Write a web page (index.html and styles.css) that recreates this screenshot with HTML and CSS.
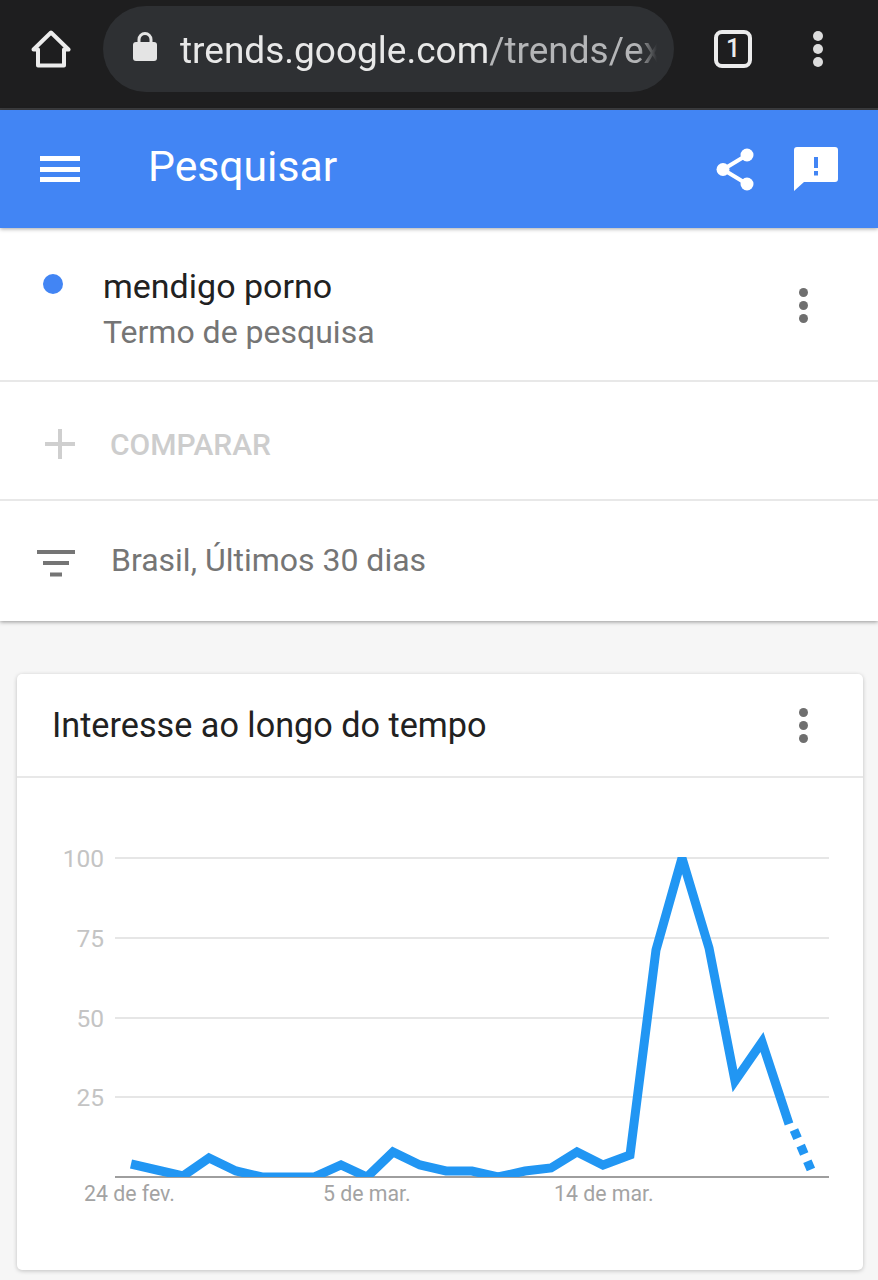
FILE: index.html
```html
<!DOCTYPE html>
<html lang="pt">
<head>
    <meta charset="utf-8" />
    <title>Google Trends</title>
    <link rel="stylesheet" href="styles.css">
</head>
<body>

<div class="browser">
    <svg class="home" width="40" height="40" viewBox="0 0 40 40"><path d="M2.500 20.500 20 3.500 37.500 20.500H33V36.500H7V20.500Z" fill="none" stroke="#ececec" stroke-width="4" stroke-linejoin="round"/></svg>
    <div class="url">
        <svg class="lock" width="24" height="30" viewBox="0 0 24 30"><path d="M6 13V8.500a6 6 0 0 1 12 0V13" fill="none" stroke="#e4e4e4" stroke-width="3"/><rect x="0" y="11" width="24" height="19" rx="3" fill="#e4e4e4"/></svg>
        <div class="urlText">trends.google.com<span>/trends/ex</span></div>
    </div>
    <div class="tabs">1</div>
    <div class="dots"><i></i><i></i><i></i></div>
</div>

<div class="appbar">
    <div class="burger"><i></i><i></i><i></i></div>
    <div class="title">Pesquisar</div>
    <svg class="share" width="40" height="44" viewBox="0 0 40 44"><path d="M31 7 7 21.500 31 36" fill="none" stroke="#fff" stroke-width="4"/><circle cx="31" cy="7" r="6.500" fill="#fff"/><circle cx="7" cy="21.500" r="6.500" fill="#fff"/><circle cx="31" cy="36" r="6.500" fill="#fff"/></svg>
    <svg class="feedback" width="44" height="44" viewBox="0 0 44 44"><path d="M3 0H41a3 3 0 0 1 3 3V32a3 3 0 0 1-3 3H10L0 44V3a3 3 0 0 1 3-3Z" fill="#fff"/><rect x="20" y="10" width="4" height="11" fill="#4285f4"/><rect x="20" y="24" width="4" height="4.500" fill="#4285f4"/></svg>
</div>

<div class="panel">
    <div class="row term">
        <span class="dot"></span>
        <div class="termText">
            <div class="termName">mendigo porno</div>
            <div class="termType">Termo de pesquisa</div>
        </div>
        <div class="more"><i></i><i></i><i></i></div>
    </div>
    <div class="row compare">
        <svg class="plus" width="30" height="30" viewBox="0 0 30 30"><path d="M0 15H30M15 0V30" stroke="#cfcfcf" stroke-width="4"/></svg>
        <span>COMPARAR</span>
    </div>
    <div class="row filter">
        <svg class="filterIcon" width="40" height="28" viewBox="0 0 40 28"><path d="M1 2H39M7 13H33M14 24.500H26" stroke="#757575" stroke-width="4"/></svg>
        <span>Brasil, Últimos 30 dias</span>
    </div>
</div>

<div class="card">
    <div class="cardHead">
        <div class="cardTitle">Interesse ao longo do tempo</div>
        <div class="more"><i></i><i></i><i></i></div>
    </div>
    <svg class="chart" width="846" height="492" viewBox="17 778 846 492">
        <defs>
            <clipPath id="plot"><rect x="115" y="857" width="714" height="320"/></clipPath>
        </defs>
        <g stroke="#e6e6e6" stroke-width="2">
            <line x1="115" y1="858" x2="829" y2="858"/>
            <line x1="115" y1="938" x2="829" y2="938"/>
            <line x1="115" y1="1018" x2="829" y2="1018"/>
            <line x1="115" y1="1097" x2="829" y2="1097"/>
        </g>
        <line x1="115" y1="1177" x2="829" y2="1177" stroke="#9e9e9e" stroke-width="2"/>
        <g class="yLabels" text-anchor="end">
            <text x="104" y="867">100</text>
            <text x="104" y="947">75</text>
            <text x="104" y="1027">50</text>
            <text x="104" y="1106">25</text>
        </g>
        <g class="xLabels">
            <text x="84" y="1201">24 de fev.</text>
            <text x="323" y="1201">5 de mar.</text>
            <text x="554" y="1201">14 de mar.</text>
        </g>
        <g clip-path="url(#plot)" fill="none" stroke="#2196f3" stroke-width="9">
            <polyline points="131,1164 157,1170 183,1176 209,1158 236,1171 262,1177 288,1177 314,1177 341,1165 367,1177 393,1152 420,1165 446,1171 472,1171 498,1177 525,1171 551,1168 577,1152 603,1165 630,1155 656,950 682,858 709,948 735,1081 762,1042 789,1124"/>
            <polyline points="794,1130 812,1172" stroke-dasharray="9 8"/>
        </g>
    </svg>
</div>

</body>
</html>
```

FILE: styles.css
```css
*{ margin:0; padding:0; box-sizing:border-box }
html{ height:100% }
body{
    width:878px; height:1280px;
    background:#f6f6f6;
    font-family:Roboto, "Liberation Sans", sans-serif;
    overflow:hidden
}

.browser{
    height:110px;
    background:#1e1e1f;
    border-bottom:2px solid #3c3d3f;
    display:flex; align-items:flex-start;
    padding:6px 0 0 31px
}
.home{ margin-top:23px; flex:none }
.url{
    width:571px; height:86px;
    margin-left:32px;
    background:#2e3033;
    border-radius:43px;
    display:flex; align-items:center;
    padding:0 0 0 30px;
    flex:none
}
.lock{ flex:none; margin-top:-6px }
.urlText{
    width:477px;
    margin:3px 0 0 23px;
    font-size:37px; line-height:46px;
    color:#e8e8e8;
    white-space:nowrap; overflow:hidden;
    -webkit-mask-image:linear-gradient(to right, #000 96%, transparent);
    mask-image:linear-gradient(to right, #000 96%, transparent)
}
.urlText span{ color:#b4b5b7 }
.tabs{
    width:38px; height:38px;
    margin:24px 0 0 40px;
    border:4px solid #ececec; border-radius:8px;
    color:#ececec;
    font-size:25px; font-weight:500; line-height:30px; text-align:center;
    flex:none
}
.dots{
    margin:25px 0 0 61px;
    display:flex; flex-direction:column; gap:3px
}
.dots i{ width:10px; height:10px; border-radius:50%; background:#dcdcdc }

.appbar{
    height:118px;
    background:#4285f4;
    box-shadow:0 1px 4px rgba(0,0,0,.35);
    position:relative;
    display:flex; align-items:center;
    padding-left:40px;
    color:#fff
}
.burger{ display:flex; flex-direction:column; gap:5.500px; flex:none }
.burger i{ width:40px; height:5px; background:#fff }
.title{ margin:-6px 0 0 68px; font-size:42.700px; line-height:50px }
.share{ margin:1px 0 0 auto }
.feedback{ margin:0 40px 0 38px }

.panel{
    height:393px;
    background:#fff;
    box-shadow:0 1px 4px rgba(0,0,0,.4)
}
.row{ display:flex; align-items:center; border-bottom:2px solid #e8e8e8 }
.row:last-child{ border-bottom:none }
.term{ height:154px; align-items:flex-start; padding:45px 0 0 43px; position:relative }
.dot{ width:20px; height:20px; margin-top:1px; border-radius:50%; background:#4285f4; flex:none }
.termText{ margin:-7px 0 0 40px }
.termName{ font-size:34px; line-height:40px; color:#212121 }
.termType{ margin-top:7px; font-size:32px; line-height:38px; color:#757575 }
.more{
    position:absolute; right:70px; top:60px;
    display:flex; flex-direction:column; gap:4px
}
.more i{ width:9px; height:9px; border-radius:50%; background:#6f6f6f }

.compare{
    height:119px;
    padding:0 0 0 45px;
    font-size:30px; font-weight:500; color:#cdcdcd
}
.compare span{ margin:7px 0 0 35px }
.plus{ margin-top:7px; flex:none }
.filter{
    height:120px;
    padding-left:36px;
    font-size:32px; color:#757575
}
.filter span{ margin:-2px 0 0 35px }
.filterIcon{ margin-top:6px; flex:none }

.card{
    width:846px; height:596px;
    margin:53px 0 0 17px;
    background:#fff;
    border-radius:5px;
    box-shadow:0 1px 4px rgba(0,0,0,.22)
}
.cardHead{
    height:104px;
    position:relative;
    border-bottom:2px solid #e8e8e8;
    display:flex; align-items:center;
    padding-left:35px
}
.cardHead .more{ right:55px; top:34px }
.cardTitle{ font-size:34.200px; color:#212121 }
.chart{ display:block }
.yLabels{ font-size:24.500px; fill:#c4c4c4 }
.xLabels{ font-size:21.300px; fill:#a3a3a3 }
```
